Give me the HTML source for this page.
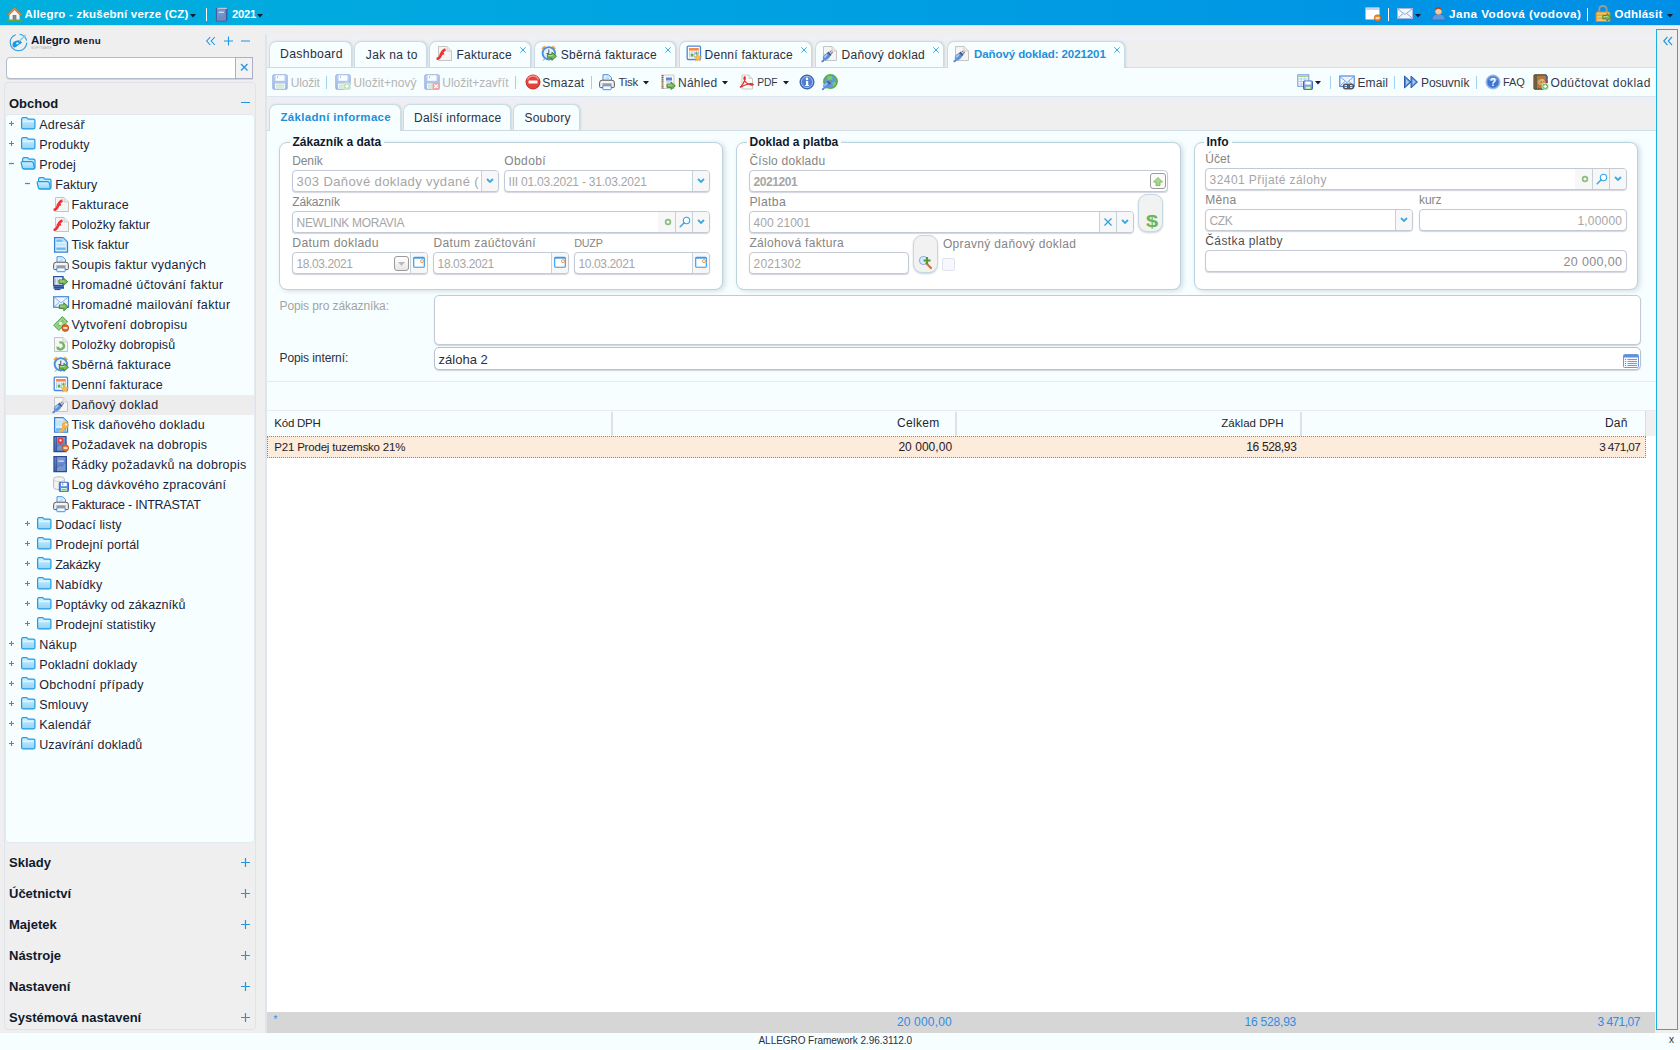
<!DOCTYPE html><html lang="cs"><head><meta charset="utf-8"><title>Allegro</title><style>
*{box-sizing:border-box;margin:0;padding:0}
html,body{width:1680px;height:1050px;overflow:hidden}
body{background:#efefef;font-family:"Liberation Sans",sans-serif;font-size:13px;color:#1b2336;position:relative}
.a{position:absolute}
.t{position:absolute;white-space:pre;line-height:1}
svg{position:absolute;overflow:visible}
#top{left:0;top:0;width:1680px;height:25px;background:linear-gradient(90deg,#00b0de 0%,#008fe6 100%)}
#top .t{color:#fff;font-weight:700}
.tab{position:absolute;top:41px;height:27px;background:#f7feff;border:1px solid #c9dbe4;border-bottom:none;border-radius:7px 7px 0 0;box-shadow:1px 0 2px rgba(150,170,190,.35)}
.tab .t{top:7px;font-size:12.5px;color:#2b3040}
.stab{position:absolute;top:104px;height:27px;background:#f7feff;border:1px solid #c9dbe4;border-bottom:none;border-radius:7px 7px 0 0;box-shadow:1px 0 2px rgba(150,170,190,.35)}
.stab .t{top:7px;font-size:12.5px;color:#2b3040}
.fs{position:absolute;background:#fff;border:1px solid #bcd3dd;border-radius:8px;box-shadow:2px 1px 5px rgba(120,140,165,.3)}
.lg{position:absolute;font-weight:700;font-size:12px;line-height:1;background:linear-gradient(#f7feff 55%,#fff 55%);padding:0 3px;color:#10192c;white-space:pre}
.lb{position:absolute;font-size:12px;line-height:1;color:#858585;white-space:pre}
.in{position:absolute;height:22px;background:#fff;border:1px solid #c3cad6;border-radius:4px;box-shadow:0 1px 1px rgba(130,140,160,.35)}
.in .v{position:absolute;left:3.600px;top:4px;font-size:13px;line-height:1;color:#a6a6a6;white-space:pre}
.in .r{left:auto;right:4px}
.bt{position:absolute;top:0;bottom:0;width:17px;background:#f7f7f7;border-left:1px solid #c3d3dc}
.bt.last{border-radius:0 3px 3px 0}
.tr{position:absolute;left:0;width:250px;height:20px}
.tr .t{top:3px;font-size:13px;color:#1b2336}
.pm{position:absolute;color:#2196e3}
.ah{position:absolute;left:9px;font-weight:700;font-size:13px;line-height:1;color:#10192c;white-space:pre}
.tb{position:absolute;top:8.500px;font-size:12px;line-height:1;color:#343a4a;white-space:pre}
.tb.d{color:#b4b4b4}
.sep{position:absolute;top:8px;width:1px;height:13px;background:#9fd2ef}
</style></head><body><svg width="0" height="0" style="position:absolute"><defs><linearGradient id="gf" x1="0" y1="0" x2="0" y2="1"><stop offset="0" stop-color="#d6f1fd"/><stop offset="1" stop-color="#8fd3f6"/></linearGradient><linearGradient id="gs" x1="0" y1="0" x2="0" y2="1"><stop offset="0" stop-color="#9fb8e8"/><stop offset="1" stop-color="#6d8fd6"/></linearGradient><linearGradient id="gb" x1="0" y1="0" x2="0" y2="1"><stop offset="0" stop-color="#7fa0d8"/><stop offset="1" stop-color="#4d6cb0"/></linearGradient></defs></svg><div id="top" class="a"><svg style="left:6px;top:6px" width="17" height="16" viewBox="0 0 16 16"><path d="M3 8 v6.500 h10 v-6.500 l-5-4.500z" fill="#f6f6f6" stroke="#c9c9c9" stroke-width=".6"/><path d="M.5 8.500 l7.500-7.500 7.500 7.500 -1.500 1.200 -6-6 -6 6z" fill="#d98c4a" stroke="#b06a2a" stroke-width=".6"/><rect x="6.500" y="9.500" width="3" height="5" fill="#8a8f9a" stroke="#5a5f6a" stroke-width=".6"/><rect x="0" y="13.500" width="16" height="1.800" rx=".9" fill="#6aa83a"/></svg><div class="t" style="top:8.5px;left:24.5px;font-size:11.5px;font-weight:700;letter-spacing:0.213px;">Allegro - zkušební verze (CZ)</div><svg style="left:190px;top:14px" width="6" height="4" viewBox="0 0 6 4"><path d="M0 0 h6 l-3 3.600z" fill="#0c1c33"/></svg><div class="a" style="left:206px;top:8px;width:1.200px;height:13px;background:#fff"></div><svg style="left:214px;top:6px" width="15" height="16" viewBox="0 0 16 16"><path d="M2.500 2 l1.500-1.500 h10.500 v13 l-1.500 2 h-10.500z" fill="#4a5fa6"/><rect x="2.500" y="2" width="10.500" height="13.500" fill="#6f96cf" stroke="#42539a" stroke-width="1"/><path d="M3.500 1.800 h10.500" stroke="#fff" stroke-width="1"/><rect x="5" y="5.500" width="5.500" height="1.200" fill="#e8eefa"/><path d="M3 12 l3-2 2 1 4.500-3 v7 h-9.500z" fill="#6a8fb8" opacity=".8"/></svg><div class="t" style="top:8.71px;left:232px;font-size:11.25px;font-weight:700;letter-spacing:-0.241px;">2021</div><svg style="left:257px;top:14px" width="6" height="4" viewBox="0 0 6 4"><path d="M0 0 h6 l-3 3.600z" fill="#0c1c33"/></svg><svg style="left:1365px;top:6px" width="16" height="16" viewBox="0 0 16 16"><rect x=".5" y="1.500" width="14" height="12" rx="1" fill="#fff" stroke="#a9b7c9" stroke-width="1"/><rect x="1" y="2" width="13" height="2" fill="#c9d3e6"/><circle cx="12.500" cy="12" r="3.300" fill="#ee8a2a" stroke="#b85a10" stroke-width=".6"/><rect x="10.600" y="11.300" width="3.800" height="1.400" fill="#fff"/></svg><div class="a" style="left:1388px;top:8px;width:1.200px;height:13px;background:#fff"></div><svg style="left:1397px;top:8px" width="16" height="11" viewBox="0 0 16 11"><rect x=".5" y=".5" width="15" height="10" fill="#f1f6fd" stroke="#9fb7de" stroke-width="1"/><path d="M.8 1 l7.200 5.500 7.200-5.500 M.8 10 l5.500-4.500 M15.200 10 l-5.500-4.500" fill="none" stroke="#8fa9d6" stroke-width="1"/></svg><svg style="left:1415px;top:14px" width="6" height="4" viewBox="0 0 6 4"><path d="M0 0 h6 l-3 3.600z" fill="#0c1c33"/></svg><svg style="left:1431px;top:6px" width="15" height="15" viewBox="0 0 16 16"><path d="M1 15 q0-5.500 4.500-6 h5 q4.500.5 4.500 6z" fill="#5b9ae0" stroke="#2f6fc2" stroke-width=".8"/><circle cx="8" cy="5.500" r="3.600" fill="#f6c9a0" stroke="#c98a5a" stroke-width=".6"/><path d="M4.200 5 q0-4 3.800-4 t3.800 4 q-2-2-3.800-2 t-3.800 2z" fill="#a8481a"/></svg><div class="t" style="top:8.29px;left:1449px;font-size:11.75px;font-weight:700;letter-spacing:0.42px;">Jana Vodová (vodova)</div><div class="a" style="left:1587px;top:8px;width:1.200px;height:13px;background:#fff"></div><svg style="left:1595px;top:5px" width="17" height="17" viewBox="0 0 16 16"><path d="M4 7 v-2.500 q0-3.500 3.500-3.500 t3.500 3.500 v2.500" fill="none" stroke="#9a9a9a" stroke-width="1.800"/><rect x="1" y="6.500" width="13" height="9" rx="1" fill="#f1c46a" stroke="#c98f2a" stroke-width="1"/><path d="M1.500 9.500 h12 M1.500 12.500 h12" stroke="#d9a23f" stroke-width="1"/><svg x="6.500" y="7.500" width="9.500" height="8" viewBox="0 0 11 10" style="position:static;overflow:visible"><path d="M.6 3 h4.900 v-2.400 l5 4.400 -5 4.400 v-2.400 h-4.900z" fill="#78b85c" stroke="#3f7f30" stroke-width="1"/><path d="M1.500 4.300 h5" stroke="#b8dfa6" stroke-width="1"/></svg></svg><div class="t" style="top:8.5px;left:1614.5px;font-size:11.5px;font-weight:700;letter-spacing:0.257px;">Odhlásit</div><svg style="left:1667px;top:14px" width="6" height="4" viewBox="0 0 6 4"><path d="M0 0 h6 l-3 3.600z" fill="#0c1c33"/></svg></div><div class="a" id="left" style="left:0;top:25px;width:260px;height:1008px"><svg style="left:9px;top:8px" width="19" height="19" viewBox="0 0 19 19"><circle cx="9.500" cy="9.500" r="8.300" fill="none" stroke="#2a9fe0" stroke-width="1.100" stroke-dasharray="36 4 10 3"/><path d="M3.500 12.500 q-.5-3.500 3-4.500 q3-1 4.500-.5 l2 2 q-1 1.500-3 2 q-2 2-4 3 q-2 .5-2.500-2z" fill="#1e97dd"/><path d="M10 8.500 l6.500-6.500" stroke="#6ccaf0" stroke-width="1.100"/><path d="M7 10 l2-.8 .8 1.200 -2 1.200z" fill="#fff"/></svg><div class="t" style="top:9.5px;left:31px;font-size:11.5px;color:#0d1b30;font-weight:700;letter-spacing:-0.1px;">Allegro</div><div class="t" style="top:22px;left:31px;font-size:3.5px;color:#b0b0b0;font-weight:400;letter-spacing:0.15px;">SOFTWARE</div><div class="t" style="top:10.87px;left:74px;font-size:9.75px;color:#10192c;font-weight:700;letter-spacing:0.449px;">Menu</div><svg style="left:205px;top:10px" width="48" height="12" viewBox="0 0 48 12"><path d="M5.300 2 l-3.600 4 3.600 4 M9.800 2 l-3.600 4 3.600 4" fill="none" stroke="#2196e3" stroke-width="1.100"/><path d="M19 6 h9 M23.500 1.500 v9 M36 6 h9" stroke="#2196e3" stroke-width="1.100"/></svg><div class="a" style="left:6px;top:32px;width:230px;height:22px;background:#fff;border:1px solid #b4bccb;border-radius:4px 0 0 4px;box-shadow:0 1px 0 rgba(120,130,150,.25)"></div><div class="a" style="left:235px;top:32px;width:18px;height:22px;background:#f3f3f3;border:1px solid #abb0c8;box-shadow:0 1px 0 rgba(120,130,150,.2)"></div><svg style="left:239.500px;top:37.500px" width="9" height="9" viewBox="0 0 9 9"><path d="M1 1 l6.500 6.500 M7.500 1 l-6.500 6.500" stroke="#2196e3" stroke-width="1.300"/></svg><div class="a" style="left:4px;top:57px;width:252px;height:948px;border:1px solid #dfe4ea;border-radius:4px"></div><div class="ah" style="top:72px">Obchod</div><div class="a" style="left:241px;top:77px;width:9px;height:1.200px;background:#2196e3"></div><div class="a" style="left:5px;top:89px;width:250px;height:729px;background:#f7feff;border-radius:4px;border:1px solid #e3e9ee;overflow:hidden"><div class="tr" style="top:0px;"><svg style="left:3px;top:6px" width="5" height="5" viewBox="0 0 5 5"><path d="M0 2.500 h5 M2.500 0 v5" stroke="#2196e3" stroke-width="1.050"/></svg><svg style="left:14.2px;top:1px" width="16" height="16" viewBox="0 0 16 16"><path d="M1.600 3.300 q0-1.600 1.600-1.600 h3 q1 0 1.500 .8 l.4 .6 h5.300 q1.500 0 1.500 1.500 v6.800 q0 1.500-1.500 1.500 h-10.300 q-1.500 0-1.500-1.500z" fill="url(#gf)" stroke="#1d9ce6" stroke-width="1.200"/><path d="M2.600 5.300 h11.200" stroke="#fff" stroke-width=".9" opacity=".85"/></svg><div class="t" style="top:3.5px;left:33.2px;font-size:12.5px;letter-spacing:0.272px;">Adresář</div></div><div class="tr" style="top:20px;"><svg style="left:3px;top:6px" width="5" height="5" viewBox="0 0 5 5"><path d="M0 2.500 h5 M2.500 0 v5" stroke="#2196e3" stroke-width="1.050"/></svg><svg style="left:14.2px;top:1px" width="16" height="16" viewBox="0 0 16 16"><path d="M1.600 3.300 q0-1.600 1.600-1.600 h3 q1 0 1.500 .8 l.4 .6 h5.300 q1.500 0 1.500 1.500 v6.800 q0 1.500-1.500 1.500 h-10.300 q-1.500 0-1.500-1.500z" fill="url(#gf)" stroke="#1d9ce6" stroke-width="1.200"/><path d="M2.600 5.300 h11.200" stroke="#fff" stroke-width=".9" opacity=".85"/></svg><div class="t" style="top:3.5px;left:33.2px;font-size:12.5px;letter-spacing:0.153px;">Produkty</div></div><div class="tr" style="top:40px;"><svg style="left:3px;top:6px" width="5" height="5" viewBox="0 0 5 5"><rect x="0" y="1.900" width="5" height="1.250" fill="#2196e3"/></svg><svg style="left:14.2px;top:1px" width="16" height="16" viewBox="0 0 16 16"><path d="M2.600 3.300 q0-1.600 1.600-1.600 h2.800 q1 0 1.500 .8 l.4 .6 h4.600 q1.500 0 1.500 1.500 v6.800 q0 1.500-1.500 1.500 h-9.400 q-1.500 0-1.500-1.500z" fill="#c4e9fb" stroke="#1d9ce6" stroke-width="1.200"/><path d="M1.300 7.300 q-.5-1.700 1.100-1.700 h9.300 q1.300 0 1.600 1.300 l1 4.600 q.3 1.400-1.100 1.400 h-9.400 q-1.200 0-1.500-1.200z" fill="url(#gf)" stroke="#1d9ce6" stroke-width="1.200"/></svg><div class="t" style="top:3.5px;left:33.2px;font-size:12.5px;letter-spacing:0.114px;">Prodej</div></div><div class="tr" style="top:60px;"><svg style="left:19px;top:6px" width="5" height="5" viewBox="0 0 5 5"><rect x="0" y="1.900" width="5" height="1.250" fill="#2196e3"/></svg><svg style="left:30.2px;top:1px" width="16" height="16" viewBox="0 0 16 16"><path d="M2.600 3.300 q0-1.600 1.600-1.600 h2.800 q1 0 1.500 .8 l.4 .6 h4.600 q1.500 0 1.500 1.500 v6.800 q0 1.500-1.500 1.500 h-9.400 q-1.500 0-1.500-1.500z" fill="#c4e9fb" stroke="#1d9ce6" stroke-width="1.200"/><path d="M1.300 7.300 q-.5-1.700 1.100-1.700 h9.300 q1.300 0 1.600 1.300 l1 4.600 q.3 1.400-1.100 1.400 h-9.400 q-1.200 0-1.500-1.200z" fill="url(#gf)" stroke="#1d9ce6" stroke-width="1.200"/></svg><div class="t" style="top:3.5px;left:49.2px;font-size:12.5px;letter-spacing:0.055px;">Faktury</div></div><div class="tr" style="top:80px;"><svg style="left:47px;top:1px" width="16" height="16" viewBox="0 0 16 16"><svg x="0" y="0" width="16" height="16" viewBox="0 0 16 16" style="position:static;overflow:visible"><path d="M2.500 1.500 h8.500 l4.500 4.500 v9.500 h-13z" fill="#f5f5f5" stroke="#c4c4c4" stroke-width="1"/><path d="M11 1.500 v4.500 h4.500" fill="#e9e9e9" stroke="#c8c8c8" stroke-width=".8"/></svg><path d="M.6 14 q3.200-.6 4.300-4.200 q1.200-4.300 4.600-5.300" fill="none" stroke="#ee3338" stroke-width="2.600"/><path d="M3.800 9.300 l4.200-.9" stroke="#ee3338" stroke-width="2"/></svg><div class="t" style="top:3.5px;left:65.4px;font-size:12.5px;letter-spacing:0.203px;">Fakturace</div></div><div class="tr" style="top:100px;"><svg style="left:47px;top:1px" width="16" height="16" viewBox="0 0 16 16"><svg x="0" y="0" width="16" height="16" viewBox="0 0 16 16" style="position:static;overflow:visible"><path d="M2.500 1.500 h8.500 l4.500 4.500 v9.500 h-13z" fill="#f5f5f5" stroke="#c4c4c4" stroke-width="1"/><path d="M11 1.500 v4.500 h4.500" fill="#e9e9e9" stroke="#c8c8c8" stroke-width=".8"/></svg><path d="M.6 14 q3.200-.6 4.300-4.200 q1.200-4.300 4.600-5.300" fill="none" stroke="#ee3338" stroke-width="2.600"/><path d="M3.800 9.300 l4.200-.9" stroke="#ee3338" stroke-width="2"/></svg><div class="t" style="top:3.5px;left:65.4px;font-size:12.5px;">Položky faktur</div></div><div class="tr" style="top:120px;"><svg style="left:47px;top:1px" width="16" height="17" viewBox="0 0 16 17"><path d="M1.600 1.600 h8.400 l4.500 4.500 v10 h-12.900z" fill="#dbeefa" stroke="#3a80d6" stroke-width="1.300"/><path d="M10 2 v4 h4z" fill="#b9dcf3"/><rect x="3.300" y="3.500" width="6.200" height="2.300" fill="#5cc0f5"/><rect x="3.300" y="11.500" width="9.400" height="2.400" fill="#5cc0f5"/><path d="M3.500 8.500 h9" stroke="#c2e3f6" stroke-width="1.500"/></svg><div class="t" style="top:3.5px;left:65.4px;font-size:12.5px;letter-spacing:0.022px;">Tisk faktur</div></div><div class="tr" style="top:140px;"><svg style="left:47px;top:1px" width="16" height="16" viewBox="0 0 16 16"><path d="M4 6.500 v-5.800 h5.500 l3 3 v2.800z" fill="#e2f1fb" stroke="#4a8fe0" stroke-width="1"/><path d="M7 3 h3 M6.500 4.500 h3.500" stroke="#a9d3f0" stroke-width=".8"/><path d="M.6 8.800 q0-2.600 2.600-2.600 h9.600 q2.600 0 2.600 2.600 v3.800 q0 1-1 1 h-12.800 q-1 0-1-1z" fill="#ececec" stroke="#5c5c5c" stroke-width="1"/><path d="M2.500 8 h11" stroke="#fff" stroke-width="1"/><rect x="3.500" y="9.300" width="9" height="2.200" fill="#9c9c9c"/><path d="M3.800 11.800 h8.400 v3.200 q0 .7-.7 .7 h-7 q-.7 0-.7-.7z" fill="#f6faff" stroke="#4a8fe0" stroke-width="1"/></svg><div class="t" style="top:3.5px;left:65.4px;font-size:12.5px;letter-spacing:0.251px;">Soupis faktur vydaných</div></div><div class="tr" style="top:160px;"><svg style="left:47px;top:1px" width="16" height="16" viewBox="0 0 16 16"><path d="M.7 .7 h9.300 v8.800 h-9.300z" fill="#eef1f6" stroke="#2b4fa0" stroke-width="1.300"/><path d="M2.500 2.500 v5 M4.300 2.500 v5" stroke="#b9c0cc" stroke-width="1"/><path d="M.5 10.200 h10.500 v2.600 h-10.500z" fill="#2b4fa0"/><path d="M1.500 13.500 h6" stroke="#2b4fa0" stroke-width="1.200"/><svg x="4.800" y="1.200" width="11" height="9" viewBox="0 0 11 10" style="position:static;overflow:visible"><path d="M.6 3 h4.900 v-2.400 l5 4.400 -5 4.400 v-2.400 h-4.900z" fill="#78b85c" stroke="#3f7f30" stroke-width="1"/><path d="M1.500 4.300 h5" stroke="#b8dfa6" stroke-width="1"/></svg></svg><div class="t" style="top:3.5px;left:65.4px;font-size:12.5px;letter-spacing:0.347px;">Hromadné účtování faktur</div></div><div class="tr" style="top:180px;"><svg style="left:47px;top:1px" width="16" height="16" viewBox="0 0 16 16"><rect x=".7" y=".7" width="14.800" height="10.600" fill="#eef5fd" stroke="#4b86dc" stroke-width="1.200"/><path d="M1 1 l7.100 6 7.100-6 M1 11 l5-4.500 M15 11 l-5-4.500" fill="none" stroke="#86b0ea" stroke-width="1"/><svg x="5.800" y="6" width="10" height="9.500" viewBox="0 0 11 10" style="position:static;overflow:visible"><path d="M.6 3 h4.900 v-2.400 l5 4.400 -5 4.400 v-2.400 h-4.900z" fill="#78b85c" stroke="#3f7f30" stroke-width="1"/><path d="M1.500 4.300 h5" stroke="#b8dfa6" stroke-width="1"/></svg></svg><div class="t" style="top:3.5px;left:65.4px;font-size:12.5px;letter-spacing:0.36px;">Hromadné mailování faktur</div></div><div class="tr" style="top:200px;"><svg style="left:47px;top:1px" width="16" height="16" viewBox="0 0 16 16"><path d="M.6 9.200 l8.800-8.600 5.200 5.200 -8.800 8.600z" fill="#86c878" stroke="#5aa64c" stroke-width="1"/><path d="M2.500 9.200 l6.900-6.700 3.300 3.300 -6.900 6.700z" fill="none" stroke="#b6e0ac" stroke-width=".8"/><circle cx="7.600" cy="7.400" r="1.600" fill="#e6f5e0"/><circle cx="12.300" cy="12" r="3.400" fill="#e86a24" stroke="#b6450c" stroke-width=".8"/><rect x="10.300" y="11.200" width="4" height="1.500" fill="#fff"/></svg><div class="t" style="top:3.5px;left:65.4px;font-size:12.5px;letter-spacing:0.283px;">Vytvoření dobropisu</div></div><div class="tr" style="top:220px;"><svg style="left:47px;top:1px" width="16" height="16" viewBox="0 0 16 16"><path d="M1.500 1.500 h8.500 l4.500 4.500 v9.500 h-13z" fill="#f5f5f5" stroke="#c4c4c4" stroke-width="1"/><path d="M10 1.500 v4.500 h4.500" fill="#e9e9e9" stroke="#c8c8c8" stroke-width=".8"/><path d="M6.300 6.700 a3.400 3.400 0 1 1-1.800 4.800" fill="none" stroke="#72b764" stroke-width="2.400"/><path d="M3.200 10.500 l3.600 .4 -2.400 3.600z" fill="#72b764"/></svg><div class="t" style="top:3.5px;left:65.4px;font-size:12.5px;letter-spacing:0.098px;">Položky dobropisů</div></div><div class="tr" style="top:240px;"><svg style="left:47px;top:1px" width="16" height="16" viewBox="0 0 16 16"><path d="M.3 3.300 l3-2.800 1.600 1.700 -3 2.800z M15 3.300 l-3-2.800 -1.600 1.700 3 2.800z" fill="#f6a93f"/><circle cx="7.800" cy="8.300" r="6.200" fill="#e9f1fb" stroke="#4b8fe0" stroke-width="1.900"/><path d="M7.800 4.500 v4 h-2.300" stroke="#555" fill="none" stroke-width="1"/><path d="M2 15.500 l1.500-1.500" stroke="#888" stroke-width="1"/><svg x="5.800" y="6.500" width="10.200" height="9.500" viewBox="0 0 11 10" style="position:static;overflow:visible"><path d="M.6 3 h4.900 v-2.400 l5 4.400 -5 4.400 v-2.400 h-4.900z" fill="#78b85c" stroke="#3f7f30" stroke-width="1"/><path d="M1.500 4.300 h5" stroke="#b8dfa6" stroke-width="1"/></svg></svg><div class="t" style="top:3.5px;left:65.4px;font-size:12.5px;letter-spacing:0.294px;">Sběrná fakturace</div></div><div class="tr" style="top:260px;"><svg style="left:47px;top:1px" width="16" height="16" viewBox="0 0 16 16"><rect x="1.200" y="1.200" width="13.300" height="13.300" rx="1" fill="#fff" stroke="#4b86dc" stroke-width="1.300"/><rect x="3" y="3" width="9.800" height="2.600" fill="#f6894a"/><path d="M3.700 6.200 v6.300 M6 6.200 v6.300 M8.300 6.200 v6.300 M10.600 6.200 v6.300 M12.500 6.200 v3" stroke="#9ab6e6" stroke-width=".9"/><path d="M4.800 8.800 h2.600 v2.600 h-2.600z M9.300 7.200 h2.300 v2.300 h-2.300z" fill="#5ab24a"/><path d="M11.800 9 l1.200 2.400 2.600.3 -1.900 1.800 .5 2.600 -2.400-1.300 -2.300 1.300 .5-2.600 -1.900-1.800 2.600-.3z" fill="#f8bd4a" stroke="#ee9f2a" stroke-width=".5"/></svg><div class="t" style="top:3.5px;left:65.4px;font-size:12.5px;letter-spacing:0.226px;">Denní fakturace</div></div><div class="tr" style="top:280px;background:#ededed;"><svg style="left:47px;top:1px" width="16" height="16" viewBox="0 0 16 16"><svg x="-1" y="0" width="16" height="16" viewBox="0 0 16 16" style="position:static;overflow:visible"><path d="M2.500 1.500 h8.500 l4.500 4.500 v9.500 h-13z" fill="#f5f5f5" stroke="#c4c4c4" stroke-width="1"/><path d="M11 1.500 v4.500 h4.500" fill="#e9e9e9" stroke="#c8c8c8" stroke-width=".8"/></svg><svg x="-.8" y="2.800" width="14" height="14" viewBox="0 0 16 16" style="position:static;overflow:visible"><path d="M.4 15.700 q2-.3 2.800-2.200" stroke="#4f7fcc" stroke-width="2" fill="none"/><ellipse cx="6.200" cy="10" rx="4.900" ry="3.300" transform="rotate(-45 6.200 10)" fill="#5e8fd8"/><ellipse cx="5.100" cy="9.200" rx="2.800" ry="1.100" transform="rotate(-45 5.100 9.200)" fill="#a9c8f2"/><path d="M6.800 5.800 l3.600 3.600 1.500-1.500 -3.600-3.600z" fill="#46598a"/><path d="M9.700 5.300 l2-2 M11.200 6.800 l2-2" stroke="#80858f" stroke-width="1.400"/></svg></svg><div class="t" style="top:3.5px;left:65.4px;font-size:12.5px;letter-spacing:0.335px;">Daňový doklad</div></div><div class="tr" style="top:300px;"><svg style="left:47px;top:1px" width="16" height="17" viewBox="0 0 16 17"><path d="M1.600 1.600 h8.400 l4.500 4.500 v10 h-12.900z" fill="#dbeefa" stroke="#3a80d6" stroke-width="1.300"/><path d="M10 2 v4 h4z" fill="#b9dcf3"/><rect x="3" y="12.200" width="10" height="2.600" fill="#5cc0f5"/><path d="M3 4 h5 l3 3 v3 h-8z" fill="#c6e4f6"/><circle cx="12.300" cy="9.300" r="3" fill="#f6b652" stroke="#e8992a" stroke-width=".7"/><path d="M10.300 10.800 l-5 5 1.600 1.200 1.200-1.200 1 .6 3.200-3.600z" fill="#f6b652" stroke="#e8992a" stroke-width=".5"/><circle cx="13" cy="8.500" r=".9" fill="#fff"/></svg><div class="t" style="top:3.5px;left:65.4px;font-size:12.5px;letter-spacing:0.261px;">Tisk daňového dokladu</div></div><div class="tr" style="top:320px;"><svg style="left:47px;top:1px" width="16" height="16" viewBox="0 0 16 16"><path d="M1 .6 h12 v15 h-12z" fill="url(#gb)" stroke="#2f4a94" stroke-width="1.300"/><path d="M3.200 1 v14.500" stroke="#2f4a94" stroke-width="1"/><path d="M4 11.500 l3-2 2 1 3.500-3 v7 h-8.500z" fill="#86a6d8" opacity=".6"/><path d="M4.800 3.200 q0-1.200 1.200-1.200 h3 q1.200 0 1.200 1.200 v2.600 q0 1-1 1.200 l-1.700 1.800 -1.700-1.800 q-1-.2-1-1.200z" fill="#ee3b3b"/><circle cx="7.500" cy="4.400" r="1.100" fill="#fff"/><circle cx="12.500" cy="12" r="3.200" fill="#ee7a2a" stroke="#b6500e" stroke-width=".7"/><rect x="10.600" y="11.300" width="3.800" height="1.400" fill="#fff"/></svg><div class="t" style="top:3.5px;left:65.4px;font-size:12.5px;letter-spacing:0.248px;">Požadavek na dobropis</div></div><div class="tr" style="top:340px;"><svg style="left:47px;top:1px" width="16" height="16" viewBox="0 0 16 16"><path d="M1 .6 h12.300 v15 h-12.300z" fill="url(#gb)" stroke="#2f4a94" stroke-width="1.300"/><path d="M3.200 1 v14.500" stroke="#2f4a94" stroke-width="1"/><rect x="5.300" y="4.500" width="5.500" height="1.300" fill="#d6e2f6"/><path d="M4 12 l3-2 2 1 3.500-3.500 v7.500 h-8.500z" fill="#86a6d8" opacity=".7"/></svg><div class="t" style="top:3.5px;left:65.4px;font-size:12.5px;letter-spacing:0.26px;">Řádky požadavků na dobropis</div></div><div class="tr" style="top:360px;"><svg style="left:47px;top:1px" width="16" height="16" viewBox="0 0 16 16"><path d="M.6 3.200 q0-2.400 5.400-2.400 t5.400 2.400 v8 q0 2.400-5.400 2.400 t-5.400-2.400z" fill="#f3f3f3" stroke="#bdbdbd" stroke-width="1"/><path d="M.6 3.200 q0 2.400 5.400 2.400 t5.400-2.400" fill="none" stroke="#c9c9c9" stroke-width=".8"/><rect x="6.300" y="6.300" width="9.200" height="9.200" rx=".8" fill="#5f8ae0" stroke="#3a64c6" stroke-width="1"/><rect x="8" y="6.800" width="5.800" height="3.400" fill="#fff"/><rect x="9.200" y="7.300" width="1" height="2" fill="#5f8ae0"/><rect x="8" y="12" width="5.800" height="3.200" fill="#dcf3d2"/><rect x="8.500" y="13.200" width="4.800" height="1.200" fill="#6cbf5a"/></svg><div class="t" style="top:3.5px;left:65.4px;font-size:12.5px;letter-spacing:0.226px;">Log dávkového zpracování</div></div><div class="tr" style="top:380px;"><svg style="left:47px;top:1px" width="16" height="16" viewBox="0 0 16 16"><path d="M4 6.500 v-5.800 h5.500 l3 3 v2.800z" fill="#e2f1fb" stroke="#4a8fe0" stroke-width="1"/><path d="M7 3 h3 M6.500 4.500 h3.500" stroke="#a9d3f0" stroke-width=".8"/><path d="M.6 8.800 q0-2.600 2.600-2.600 h9.600 q2.600 0 2.600 2.600 v3.800 q0 1-1 1 h-12.800 q-1 0-1-1z" fill="#ececec" stroke="#5c5c5c" stroke-width="1"/><path d="M2.500 8 h11" stroke="#fff" stroke-width="1"/><rect x="3.500" y="9.300" width="9" height="2.200" fill="#9c9c9c"/><path d="M3.800 11.800 h8.400 v3.200 q0 .7-.7 .7 h-7 q-.7 0-.7-.7z" fill="#f6faff" stroke="#4a8fe0" stroke-width="1"/></svg><div class="t" style="top:3.5px;left:65.4px;font-size:12.5px;letter-spacing:-0.244px;">Fakturace - INTRASTAT</div></div><div class="tr" style="top:400px;"><svg style="left:19px;top:6px" width="5" height="5" viewBox="0 0 5 5"><path d="M0 2.500 h5 M2.500 0 v5" stroke="#2196e3" stroke-width="1.050"/></svg><svg style="left:30.2px;top:1px" width="16" height="16" viewBox="0 0 16 16"><path d="M1.600 3.300 q0-1.600 1.600-1.600 h3 q1 0 1.500 .8 l.4 .6 h5.300 q1.500 0 1.500 1.500 v6.800 q0 1.500-1.500 1.500 h-10.300 q-1.500 0-1.500-1.500z" fill="url(#gf)" stroke="#1d9ce6" stroke-width="1.200"/><path d="M2.600 5.300 h11.200" stroke="#fff" stroke-width=".9" opacity=".85"/></svg><div class="t" style="top:3.5px;left:49.2px;font-size:12.5px;letter-spacing:0.163px;">Dodací listy</div></div><div class="tr" style="top:420px;"><svg style="left:19px;top:6px" width="5" height="5" viewBox="0 0 5 5"><path d="M0 2.500 h5 M2.500 0 v5" stroke="#2196e3" stroke-width="1.050"/></svg><svg style="left:30.2px;top:1px" width="16" height="16" viewBox="0 0 16 16"><path d="M1.600 3.300 q0-1.600 1.600-1.600 h3 q1 0 1.500 .8 l.4 .6 h5.300 q1.500 0 1.500 1.500 v6.800 q0 1.500-1.500 1.500 h-10.300 q-1.500 0-1.500-1.500z" fill="url(#gf)" stroke="#1d9ce6" stroke-width="1.200"/><path d="M2.600 5.300 h11.200" stroke="#fff" stroke-width=".9" opacity=".85"/></svg><div class="t" style="top:3.5px;left:49.2px;font-size:12.5px;letter-spacing:0.186px;">Prodejní portál</div></div><div class="tr" style="top:440px;"><svg style="left:19px;top:6px" width="5" height="5" viewBox="0 0 5 5"><path d="M0 2.500 h5 M2.500 0 v5" stroke="#2196e3" stroke-width="1.050"/></svg><svg style="left:30.2px;top:1px" width="16" height="16" viewBox="0 0 16 16"><path d="M1.600 3.300 q0-1.600 1.600-1.600 h3 q1 0 1.500 .8 l.4 .6 h5.300 q1.500 0 1.500 1.500 v6.800 q0 1.500-1.500 1.500 h-10.300 q-1.500 0-1.500-1.500z" fill="url(#gf)" stroke="#1d9ce6" stroke-width="1.200"/><path d="M2.600 5.300 h11.200" stroke="#fff" stroke-width=".9" opacity=".85"/></svg><div class="t" style="top:3.5px;left:49.2px;font-size:12.5px;letter-spacing:-0.206px;">Zakázky</div></div><div class="tr" style="top:460px;"><svg style="left:19px;top:6px" width="5" height="5" viewBox="0 0 5 5"><path d="M0 2.500 h5 M2.500 0 v5" stroke="#2196e3" stroke-width="1.050"/></svg><svg style="left:30.2px;top:1px" width="16" height="16" viewBox="0 0 16 16"><path d="M1.600 3.300 q0-1.600 1.600-1.600 h3 q1 0 1.500 .8 l.4 .6 h5.300 q1.500 0 1.500 1.500 v6.800 q0 1.500-1.500 1.500 h-10.300 q-1.500 0-1.500-1.500z" fill="url(#gf)" stroke="#1d9ce6" stroke-width="1.200"/><path d="M2.600 5.300 h11.200" stroke="#fff" stroke-width=".9" opacity=".85"/></svg><div class="t" style="top:3.5px;left:49.2px;font-size:12.5px;letter-spacing:0.208px;">Nabídky</div></div><div class="tr" style="top:480px;"><svg style="left:19px;top:6px" width="5" height="5" viewBox="0 0 5 5"><path d="M0 2.500 h5 M2.500 0 v5" stroke="#2196e3" stroke-width="1.050"/></svg><svg style="left:30.2px;top:1px" width="16" height="16" viewBox="0 0 16 16"><path d="M1.600 3.300 q0-1.600 1.600-1.600 h3 q1 0 1.500 .8 l.4 .6 h5.300 q1.500 0 1.500 1.500 v6.800 q0 1.500-1.500 1.500 h-10.300 q-1.500 0-1.500-1.500z" fill="url(#gf)" stroke="#1d9ce6" stroke-width="1.200"/><path d="M2.600 5.300 h11.200" stroke="#fff" stroke-width=".9" opacity=".85"/></svg><div class="t" style="top:3.5px;left:49.2px;font-size:12.5px;letter-spacing:0.083px;">Poptávky od zákazníků</div></div><div class="tr" style="top:500px;"><svg style="left:19px;top:6px" width="5" height="5" viewBox="0 0 5 5"><path d="M0 2.500 h5 M2.500 0 v5" stroke="#2196e3" stroke-width="1.050"/></svg><svg style="left:30.2px;top:1px" width="16" height="16" viewBox="0 0 16 16"><path d="M1.600 3.300 q0-1.600 1.600-1.600 h3 q1 0 1.500 .8 l.4 .6 h5.300 q1.500 0 1.500 1.500 v6.800 q0 1.500-1.500 1.500 h-10.300 q-1.500 0-1.500-1.500z" fill="url(#gf)" stroke="#1d9ce6" stroke-width="1.200"/><path d="M2.600 5.300 h11.200" stroke="#fff" stroke-width=".9" opacity=".85"/></svg><div class="t" style="top:3.5px;left:49.2px;font-size:12.5px;letter-spacing:0.136px;">Prodejní statistiky</div></div><div class="tr" style="top:520px;"><svg style="left:3px;top:6px" width="5" height="5" viewBox="0 0 5 5"><path d="M0 2.500 h5 M2.500 0 v5" stroke="#2196e3" stroke-width="1.050"/></svg><svg style="left:14.2px;top:1px" width="16" height="16" viewBox="0 0 16 16"><path d="M1.600 3.300 q0-1.600 1.600-1.600 h3 q1 0 1.500 .8 l.4 .6 h5.300 q1.500 0 1.500 1.500 v6.800 q0 1.500-1.500 1.500 h-10.300 q-1.500 0-1.500-1.500z" fill="url(#gf)" stroke="#1d9ce6" stroke-width="1.200"/><path d="M2.600 5.300 h11.200" stroke="#fff" stroke-width=".9" opacity=".85"/></svg><div class="t" style="top:3.5px;left:33.2px;font-size:12.5px;letter-spacing:0.317px;">Nákup</div></div><div class="tr" style="top:540px;"><svg style="left:3px;top:6px" width="5" height="5" viewBox="0 0 5 5"><path d="M0 2.500 h5 M2.500 0 v5" stroke="#2196e3" stroke-width="1.050"/></svg><svg style="left:14.2px;top:1px" width="16" height="16" viewBox="0 0 16 16"><path d="M1.600 3.300 q0-1.600 1.600-1.600 h3 q1 0 1.500 .8 l.4 .6 h5.300 q1.500 0 1.500 1.500 v6.800 q0 1.500-1.500 1.500 h-10.300 q-1.500 0-1.500-1.500z" fill="url(#gf)" stroke="#1d9ce6" stroke-width="1.200"/><path d="M2.600 5.300 h11.200" stroke="#fff" stroke-width=".9" opacity=".85"/></svg><div class="t" style="top:3.5px;left:33.2px;font-size:12.5px;letter-spacing:0.174px;">Pokladní doklady</div></div><div class="tr" style="top:560px;"><svg style="left:3px;top:6px" width="5" height="5" viewBox="0 0 5 5"><path d="M0 2.500 h5 M2.500 0 v5" stroke="#2196e3" stroke-width="1.050"/></svg><svg style="left:14.2px;top:1px" width="16" height="16" viewBox="0 0 16 16"><path d="M1.600 3.300 q0-1.600 1.600-1.600 h3 q1 0 1.500 .8 l.4 .6 h5.300 q1.500 0 1.500 1.500 v6.800 q0 1.500-1.500 1.500 h-10.300 q-1.500 0-1.500-1.500z" fill="url(#gf)" stroke="#1d9ce6" stroke-width="1.200"/><path d="M2.600 5.300 h11.200" stroke="#fff" stroke-width=".9" opacity=".85"/></svg><div class="t" style="top:3.5px;left:33.2px;font-size:12.5px;letter-spacing:0.329px;">Obchodní případy</div></div><div class="tr" style="top:580px;"><svg style="left:3px;top:6px" width="5" height="5" viewBox="0 0 5 5"><path d="M0 2.500 h5 M2.500 0 v5" stroke="#2196e3" stroke-width="1.050"/></svg><svg style="left:14.2px;top:1px" width="16" height="16" viewBox="0 0 16 16"><path d="M1.600 3.300 q0-1.600 1.600-1.600 h3 q1 0 1.500 .8 l.4 .6 h5.300 q1.500 0 1.500 1.500 v6.800 q0 1.500-1.500 1.500 h-10.300 q-1.500 0-1.500-1.500z" fill="url(#gf)" stroke="#1d9ce6" stroke-width="1.200"/><path d="M2.600 5.300 h11.200" stroke="#fff" stroke-width=".9" opacity=".85"/></svg><div class="t" style="top:3.5px;left:33.2px;font-size:12.5px;letter-spacing:0.178px;">Smlouvy</div></div><div class="tr" style="top:600px;"><svg style="left:3px;top:6px" width="5" height="5" viewBox="0 0 5 5"><path d="M0 2.500 h5 M2.500 0 v5" stroke="#2196e3" stroke-width="1.050"/></svg><svg style="left:14.2px;top:1px" width="16" height="16" viewBox="0 0 16 16"><path d="M1.600 3.300 q0-1.600 1.600-1.600 h3 q1 0 1.500 .8 l.4 .6 h5.300 q1.500 0 1.500 1.500 v6.800 q0 1.500-1.500 1.500 h-10.300 q-1.500 0-1.500-1.500z" fill="url(#gf)" stroke="#1d9ce6" stroke-width="1.200"/><path d="M2.600 5.300 h11.200" stroke="#fff" stroke-width=".9" opacity=".85"/></svg><div class="t" style="top:3.5px;left:33.2px;font-size:12.5px;letter-spacing:0.224px;">Kalendář</div></div><div class="tr" style="top:620px;"><svg style="left:3px;top:6px" width="5" height="5" viewBox="0 0 5 5"><path d="M0 2.500 h5 M2.500 0 v5" stroke="#2196e3" stroke-width="1.050"/></svg><svg style="left:14.2px;top:1px" width="16" height="16" viewBox="0 0 16 16"><path d="M1.600 3.300 q0-1.600 1.600-1.600 h3 q1 0 1.500 .8 l.4 .6 h5.300 q1.500 0 1.500 1.500 v6.800 q0 1.500-1.500 1.500 h-10.300 q-1.500 0-1.500-1.500z" fill="url(#gf)" stroke="#1d9ce6" stroke-width="1.200"/><path d="M2.600 5.300 h11.200" stroke="#fff" stroke-width=".9" opacity=".85"/></svg><div class="t" style="top:3.5px;left:33.2px;font-size:12.5px;letter-spacing:0.141px;">Uzavírání dokladů</div></div></div><div class="ah" style="top:831px">Sklady</div><svg style="left:241px;top:832.5px" width="9" height="9" viewBox="0 0 9 9"><path d="M0 4.500 h9 M4.500 0 v9" stroke="#2196e3" stroke-width="1.200"/></svg><div class="ah" style="top:862px">Účetnictví</div><svg style="left:241px;top:863.5px" width="9" height="9" viewBox="0 0 9 9"><path d="M0 4.500 h9 M4.500 0 v9" stroke="#2196e3" stroke-width="1.200"/></svg><div class="ah" style="top:893px">Majetek</div><svg style="left:241px;top:894.5px" width="9" height="9" viewBox="0 0 9 9"><path d="M0 4.500 h9 M4.500 0 v9" stroke="#2196e3" stroke-width="1.200"/></svg><div class="ah" style="top:924px">Nástroje</div><svg style="left:241px;top:925.5px" width="9" height="9" viewBox="0 0 9 9"><path d="M0 4.500 h9 M4.500 0 v9" stroke="#2196e3" stroke-width="1.200"/></svg><div class="ah" style="top:955px">Nastavení</div><svg style="left:241px;top:956.5px" width="9" height="9" viewBox="0 0 9 9"><path d="M0 4.500 h9 M4.500 0 v9" stroke="#2196e3" stroke-width="1.200"/></svg><div class="ah" style="top:986px">Systémová nastavení</div><svg style="left:241px;top:987.5px" width="9" height="9" viewBox="0 0 9 9"><path d="M0 4.500 h9 M4.500 0 v9" stroke="#2196e3" stroke-width="1.200"/></svg></div><div class="a" style="left:265px;top:34px;width:1.500px;height:999px;background:#dfe5ec"></div><div class="a" style="left:267px;top:35px;width:1389px;height:4.500px;background:#eeeff7"></div><div class="a" style="left:0;top:25px;width:1680px;height:1px;background:#d3dbe3"></div><div class="a" style="left:267px;top:67px;width:1389px;height:1px;background:#d3dfe7"></div><div class="tab" style="left:269px;width:83px;height:26px"><div class="t" style="top:6.29px;left:10px;font-size:12.25px;letter-spacing:0.322px;">Dashboard</div></div><div class="tab" style="left:354px;width:73px;height:26px"><div class="t" style="top:6.5px;left:10.8px;font-size:12px;letter-spacing:0.376px;">Jak na to</div></div><div class="tab" style="left:429px;width:102px;height:26px"><svg style="left:5.5px;top:2.8px" width="16" height="16" viewBox="0 0 16 16"><svg x="0" y="0" width="16" height="16" viewBox="0 0 16 16" style="position:static;overflow:visible"><path d="M2.500 1.500 h8.500 l4.500 4.500 v9.500 h-13z" fill="#f5f5f5" stroke="#c4c4c4" stroke-width="1"/><path d="M11 1.500 v4.500 h4.500" fill="#e9e9e9" stroke="#c8c8c8" stroke-width=".8"/></svg><path d="M.6 14 q3.200-.6 4.300-4.200 q1.200-4.300 4.600-5.300" fill="none" stroke="#ee3338" stroke-width="2.600"/><path d="M3.800 9.300 l4.200-.9" stroke="#ee3338" stroke-width="2"/></svg><div class="t" style="top:6.5px;left:26.4px;font-size:12px;letter-spacing:0.256px;">Fakturace</div><svg style="left:89.5px;top:4.500px" width="6" height="6" viewBox="0 0 6 6"><path d="M.3 .3 l5.400 5.400 M5.700 .3 l-5.400 5.400" stroke="#3eaae6" stroke-width="1"/></svg></div><div class="tab" style="left:534px;width:142px;height:26px"><svg style="left:5.5px;top:2.8px" width="16" height="16" viewBox="0 0 16 16"><path d="M.3 3.300 l3-2.800 1.600 1.700 -3 2.800z M15 3.300 l-3-2.800 -1.600 1.700 3 2.800z" fill="#f6a93f"/><circle cx="7.800" cy="8.300" r="6.200" fill="#e9f1fb" stroke="#4b8fe0" stroke-width="1.900"/><path d="M7.800 4.500 v4 h-2.300" stroke="#555" fill="none" stroke-width="1"/><path d="M2 15.500 l1.500-1.500" stroke="#888" stroke-width="1"/><svg x="5.800" y="6.500" width="10.200" height="9.500" viewBox="0 0 11 10" style="position:static;overflow:visible"><path d="M.6 3 h4.900 v-2.400 l5 4.400 -5 4.400 v-2.400 h-4.900z" fill="#78b85c" stroke="#3f7f30" stroke-width="1"/><path d="M1.500 4.300 h5" stroke="#b8dfa6" stroke-width="1"/></svg></svg><div class="t" style="top:6.5px;left:25.8px;font-size:12px;letter-spacing:0.295px;">Sběrná fakturace</div><svg style="left:129.5px;top:4.500px" width="6" height="6" viewBox="0 0 6 6"><path d="M.3 .3 l5.400 5.400 M5.700 .3 l-5.400 5.400" stroke="#3eaae6" stroke-width="1"/></svg></div><div class="tab" style="left:679px;width:133px;height:26px"><svg style="left:5.5px;top:2.8px" width="16" height="16" viewBox="0 0 16 16"><rect x="1.200" y="1.200" width="13.300" height="13.300" rx="1" fill="#fff" stroke="#4b86dc" stroke-width="1.300"/><rect x="3" y="3" width="9.800" height="2.600" fill="#f6894a"/><path d="M3.700 6.200 v6.300 M6 6.200 v6.300 M8.300 6.200 v6.300 M10.600 6.200 v6.300 M12.500 6.200 v3" stroke="#9ab6e6" stroke-width=".9"/><path d="M4.800 8.800 h2.600 v2.600 h-2.600z M9.300 7.200 h2.300 v2.300 h-2.300z" fill="#5ab24a"/><path d="M11.800 9 l1.200 2.400 2.600.3 -1.900 1.800 .5 2.600 -2.400-1.300 -2.300 1.300 .5-2.600 -1.900-1.800 2.600-.3z" fill="#f8bd4a" stroke="#ee9f2a" stroke-width=".5"/></svg><div class="t" style="top:6.5px;left:24.6px;font-size:12px;letter-spacing:0.249px;">Denní fakturace</div><svg style="left:120.5px;top:4.500px" width="6" height="6" viewBox="0 0 6 6"><path d="M.3 .3 l5.400 5.400 M5.700 .3 l-5.400 5.400" stroke="#3eaae6" stroke-width="1"/></svg></div><div class="tab" style="left:815px;width:129px;height:26px"><svg style="left:5.5px;top:2.8px" width="16" height="16" viewBox="0 0 16 16"><svg x="-1" y="0" width="16" height="16" viewBox="0 0 16 16" style="position:static;overflow:visible"><path d="M2.500 1.500 h8.500 l4.500 4.500 v9.500 h-13z" fill="#f5f5f5" stroke="#c4c4c4" stroke-width="1"/><path d="M11 1.500 v4.500 h4.500" fill="#e9e9e9" stroke="#c8c8c8" stroke-width=".8"/></svg><svg x="-.8" y="2.800" width="14" height="14" viewBox="0 0 16 16" style="position:static;overflow:visible"><path d="M.4 15.700 q2-.3 2.800-2.200" stroke="#4f7fcc" stroke-width="2" fill="none"/><ellipse cx="6.200" cy="10" rx="4.900" ry="3.300" transform="rotate(-45 6.200 10)" fill="#5e8fd8"/><ellipse cx="5.100" cy="9.200" rx="2.800" ry="1.100" transform="rotate(-45 5.100 9.200)" fill="#a9c8f2"/><path d="M6.800 5.800 l3.600 3.600 1.500-1.500 -3.600-3.600z" fill="#46598a"/><path d="M9.700 5.300 l2-2 M11.200 6.800 l2-2" stroke="#80858f" stroke-width="1.400"/></svg></svg><div class="t" style="top:6.5px;left:25.6px;font-size:12px;letter-spacing:0.318px;">Daňový doklad</div><svg style="left:116.5px;top:4.500px" width="6" height="6" viewBox="0 0 6 6"><path d="M.3 .3 l5.400 5.400 M5.700 .3 l-5.400 5.400" stroke="#3eaae6" stroke-width="1"/></svg></div><div class="tab" style="left:947px;width:178px;height:28px"><svg style="left:5.5px;top:2.8px" width="16" height="16" viewBox="0 0 16 16"><svg x="-1" y="0" width="16" height="16" viewBox="0 0 16 16" style="position:static;overflow:visible"><path d="M2.500 1.500 h8.500 l4.500 4.500 v9.500 h-13z" fill="#f5f5f5" stroke="#c4c4c4" stroke-width="1"/><path d="M11 1.500 v4.500 h4.500" fill="#e9e9e9" stroke="#c8c8c8" stroke-width=".8"/></svg><svg x="-.8" y="2.800" width="14" height="14" viewBox="0 0 16 16" style="position:static;overflow:visible"><path d="M.4 15.700 q2-.3 2.800-2.200" stroke="#4f7fcc" stroke-width="2" fill="none"/><ellipse cx="6.200" cy="10" rx="4.900" ry="3.300" transform="rotate(-45 6.200 10)" fill="#5e8fd8"/><ellipse cx="5.100" cy="9.200" rx="2.800" ry="1.100" transform="rotate(-45 5.100 9.200)" fill="#a9c8f2"/><path d="M6.800 5.800 l3.600 3.600 1.500-1.500 -3.600-3.600z" fill="#46598a"/><path d="M9.700 5.300 l2-2 M11.200 6.800 l2-2" stroke="#80858f" stroke-width="1.400"/></svg></svg><div class="t" style="top:7px;left:26px;font-size:11.5px;color:#1f8fd8;font-weight:700;letter-spacing:-0.085px;">Daňový doklad: 2021201</div><svg style="left:165.5px;top:4.500px" width="6" height="6" viewBox="0 0 6 6"><path d="M.3 .3 l5.400 5.400 M5.700 .3 l-5.400 5.400" stroke="#3eaae6" stroke-width="1"/></svg></div><div class="a" style="left:267px;top:68px;width:1389px;height:29px;background:#f7feff;border-bottom:1px solid #dde6ee"><svg style="left:5px;top:6px;opacity:0.62" width="16" height="16" viewBox="0 0 16 16"><rect x=".8" y=".8" width="14.400" height="14.400" rx="1" fill="url(#gs)" stroke="#5f82d2" stroke-width="1"/><rect x="3.500" y="1.300" width="9" height="5.500" fill="#fdfdff"/><rect x="5" y="2" width="1" height="2.200" fill="#8aa3df"/><rect x="3" y="9.500" width="10" height="5.200" fill="#f3faef"/><rect x="4" y="10.800" width="8" height=".9" fill="#8cc97c"/><rect x="4" y="12.600" width="8" height=".9" fill="#8cc97c"/></svg><div class="tb d" style="left:23.7px;top:8.5px;font-size:12px;letter-spacing:-0.181px">Uložit</div><div class="sep" style="left:59px"></div><svg style="left:68px;top:6px;opacity:0.62" width="16" height="16" viewBox="0 0 16 16"><svg x="0" y="0" width="16" height="16" viewBox="0 0 16 16" style="position:static;overflow:visible"><rect x=".8" y=".8" width="14.400" height="14.400" rx="1" fill="url(#gs)" stroke="#5f82d2" stroke-width="1"/><rect x="3.500" y="1.300" width="9" height="5.500" fill="#fdfdff"/><rect x="5" y="2" width="1" height="2.200" fill="#8aa3df"/><rect x="3" y="9.500" width="10" height="5.200" fill="#f3faef"/><rect x="4" y="10.800" width="8" height=".9" fill="#8cc97c"/><rect x="4" y="12.600" width="8" height=".9" fill="#8cc97c"/></svg><circle cx="12" cy="12.200" r="3.600" fill="#8fd07a" stroke="#d9f3d0" stroke-width=".8"/><path d="M10 12.200 h4 M12 10.200 v4" stroke="#fff" stroke-width="1.300"/></svg><div class="tb d" style="left:86.5px;top:8.5px;font-size:12px;letter-spacing:0.064px">Uložit+nový</div><svg style="left:157px;top:6px;opacity:0.62" width="16" height="16" viewBox="0 0 16 16"><svg x="0" y="0" width="16" height="16" viewBox="0 0 16 16" style="position:static;overflow:visible"><rect x=".8" y=".8" width="14.400" height="14.400" rx="1" fill="url(#gs)" stroke="#5f82d2" stroke-width="1"/><rect x="3.500" y="1.300" width="9" height="5.500" fill="#fdfdff"/><rect x="5" y="2" width="1" height="2.200" fill="#8aa3df"/><rect x="3" y="9.500" width="10" height="5.200" fill="#f3faef"/><rect x="4" y="10.800" width="8" height=".9" fill="#8cc97c"/><rect x="4" y="12.600" width="8" height=".9" fill="#8cc97c"/></svg><rect x="8.600" y="8.800" width="7" height="7" rx="1.500" fill="#ee6a62"/><path d="M10.300 10.500 l3.600 3.600 M13.900 10.500 l-3.600 3.600" stroke="#fff" stroke-width="1.400"/></svg><div class="tb d" style="left:175.3px;top:8.5px;font-size:12px;letter-spacing:-0.013px">Uložit+zavřít</div><div class="sep" style="left:248.3px"></div><svg style="left:257.5px;top:6px" width="16" height="16" viewBox="0 0 16 16"><circle cx="8" cy="8" r="7" fill="#e8413a" stroke="#c02a22" stroke-width="1"/><path d="M2.500 5.500 a6 6 0 0 1 11 0" fill="none" stroke="#f7a39e" stroke-width="1.500" opacity=".8"/><rect x="3.500" y="6.500" width="9" height="3" rx=".5" fill="#fff"/></svg><div class="tb" style="left:275.3px;top:8.5px;font-size:12px;letter-spacing:0.244px">Smazat</div><div class="sep" style="left:323.5px"></div><svg style="left:332px;top:6px" width="16" height="16" viewBox="0 0 16 16"><path d="M4 6.500 v-5.800 h5.500 l3 3 v2.800z" fill="#e2f1fb" stroke="#4a8fe0" stroke-width="1"/><path d="M7 3 h3 M6.500 4.500 h3.500" stroke="#a9d3f0" stroke-width=".8"/><path d="M.6 8.800 q0-2.600 2.600-2.600 h9.600 q2.600 0 2.600 2.600 v3.800 q0 1-1 1 h-12.800 q-1 0-1-1z" fill="#ececec" stroke="#5c5c5c" stroke-width="1"/><path d="M2.500 8 h11" stroke="#fff" stroke-width="1"/><rect x="3.500" y="9.300" width="9" height="2.200" fill="#9c9c9c"/><path d="M3.800 11.800 h8.400 v3.200 q0 .7-.7 .7 h-7 q-.7 0-.7-.7z" fill="#f6faff" stroke="#4a8fe0" stroke-width="1"/></svg><div class="tb" style="left:351.5px;top:8.92px;font-size:11.5px;letter-spacing:-0.284px">Tisk</div><svg style="left:376px;top:13px" width="6" height="4" viewBox="0 0 6 4"><path d="M0 0 h6 l-3 3.600z" fill="#0c1c33"/></svg><svg style="left:393px;top:6px" width="16" height="16" viewBox="0 0 16 16"><rect x="2.500" y="1" width="11.500" height="13.500" fill="#f8f8f8" stroke="#c9c9c9" stroke-width="1"/><path d="M2.500 1 v13.500" stroke="#9a5a2c" stroke-width="2.200" stroke-dasharray="1.200 .9"/><rect x="6" y="3.500" width="6" height="3" fill="#5d86d8"/><rect x="6" y="7.500" width="5" height="1" fill="#a8bce8"/><svg x="6.200" y="7.500" width="9.800" height="8.500" viewBox="0 0 11 10" style="position:static;overflow:visible"><path d="M.6 3 h4.900 v-2.400 l5 4.400 -5 4.400 v-2.400 h-4.900z" fill="#78b85c" stroke="#3f7f30" stroke-width="1"/><path d="M1.500 4.300 h5" stroke="#b8dfa6" stroke-width="1"/></svg></svg><div class="tb" style="left:411px;top:8.5px;font-size:12px;letter-spacing:0.235px">Náhled</div><svg style="left:455px;top:13px" width="6" height="4" viewBox="0 0 6 4"><path d="M0 0 h6 l-3 3.600z" fill="#0c1c33"/></svg><svg style="left:472px;top:6px" width="16" height="16" viewBox="0 0 16 16"><path d="M3 1 h7 l3.500 3.500 v10.500 h-10.500z" fill="#fbfbfb" stroke="#c9c9c9" stroke-width="1"/><path d="M10 1 v3.500 h3.500" fill="#e9e9e9" stroke="#c9c9c9" stroke-width=".8"/><path d="M1 13.500 q3.500-3 5-8 q.7-2.500-.4-2.800 q-1 .300-.5 2.600 q1 4 7.500 5.800 q1.800.2 1.600-.7 q-.6-1-3-.7 q-5 .8-10.200 3.800z" fill="none" stroke="#e0322c" stroke-width="1.200"/></svg><div class="tb" style="left:490.2px;top:9.98px;font-size:10.25px;letter-spacing:-0.1px">PDF</div><svg style="left:515.5px;top:13px" width="6" height="4" viewBox="0 0 6 4"><path d="M0 0 h6 l-3 3.600z" fill="#0c1c33"/></svg><svg style="left:531.5px;top:6px" width="16" height="16" viewBox="0 0 16 16"><circle cx="8" cy="8" r="7" fill="#4f7fd0" stroke="#2c55a6" stroke-width="1"/><circle cx="8" cy="8" r="5.600" fill="none" stroke="#a9c3ee" stroke-width=".9"/><rect x="7" y="7" width="2.200" height="4.600" fill="#fff"/><rect x="6.200" y="11" width="3.800" height="1" fill="#fff"/><circle cx="8" cy="4.900" r="1.300" fill="#fff"/></svg><svg style="left:555px;top:6px" width="16" height="16" viewBox="0 0 16 16"><circle cx="8.500" cy="7.500" r="6.700" fill="#5b9be2" stroke="#5cae3c" stroke-width="1.500"/><path d="M5.500 2.500 q3-1.500 4.500 .5 q1.500 1.500 -.5 3 q-2.500 1.500-4-.5 q-1-2 0-3z M10.500 8.500 q2.500-1 3.500 .5 q-.5 2.500-2.500 3.500 q-1.500-1.500-1-4z" fill="#7cc86a"/><svg x="-.3" y="3.300" width="12.500" height="12.500" viewBox="0 0 16 16" style="position:static;overflow:visible"><path d="M.4 15.700 q2-.3 2.800-2.200" stroke="#4f7fcc" stroke-width="2" fill="none"/><ellipse cx="6.200" cy="10" rx="4.900" ry="3.300" transform="rotate(-45 6.200 10)" fill="#5e8fd8"/><ellipse cx="5.100" cy="9.200" rx="2.800" ry="1.100" transform="rotate(-45 5.100 9.200)" fill="#a9c8f2"/><path d="M6.800 5.800 l3.600 3.600 1.500-1.500 -3.600-3.600z" fill="#46598a"/><path d="M9.700 5.300 l2-2 M11.200 6.800 l2-2" stroke="#80858f" stroke-width="1.400"/></svg></svg><svg style="left:1030px;top:6px" width="16" height="16" viewBox="0 0 16 16"><rect x=".8" y=".8" width="11" height="11.500" fill="#fff" stroke="#6d97dc" stroke-width="1"/><rect x="1.500" y="1.500" width="9.600" height="1.600" fill="#9fd08a"/><path d="M1 5 h10.500 M1 7.500 h10.500 M1 10 h10.500 M4.200 3.500 v8.500 M7.800 3.500 v8.500" stroke="#a9c1ea" stroke-width=".8"/><rect x="6.500" y="7" width="9" height="8.500" rx=".8" fill="url(#gs)" stroke="#3f64c2" stroke-width="1"/><rect x="8.300" y="7.500" width="5.400" height="3" fill="#fff"/><rect x="8.300" y="12.300" width="5.400" height="2.700" fill="#d9f2d0" stroke="#78b868" stroke-width=".5"/></svg><svg style="left:1048px;top:13px" width="6" height="4" viewBox="0 0 6 4"><path d="M0 0 h6 l-3 3.600z" fill="#0c1c33"/></svg><div class="sep" style="left:1063px"></div><svg style="left:1072px;top:6px" width="16" height="16" viewBox="0 0 16 16"><rect x=".8" y="2" width="14.400" height="10.500" fill="#edf4fd" stroke="#4b80d6" stroke-width="1.100"/><path d="M1 2.500 l7 6 7-6 M1 12 l5-4.500 M15 12 l-5-4.500" fill="none" stroke="#7aa6e6" stroke-width="1"/><rect x="4.500" y="10.300" width="6" height="4.400" rx="2.200" fill="none" stroke="#555" stroke-width="1.500"/><rect x="8.500" y="10.300" width="6" height="4.400" rx="2.200" fill="none" stroke="#555" stroke-width="1.500"/></svg><div class="tb" style="left:1090.5px;top:8.5px;font-size:12px;letter-spacing:0.074px">Email</div><div class="sep" style="left:1127px"></div><svg style="left:1136px;top:6px" width="16" height="16" viewBox="0 0 16 16"><path d="M1.500 2 l6.500 6 -6.500 6z" fill="#4f86d6" stroke="#2c5cae" stroke-width="1"/><path d="M8 2 l6.500 6 -6.500 6z" fill="#4f86d6" stroke="#2c5cae" stroke-width="1"/><path d="M3 5 l3.200 3 -3.200 3z M9.500 5 l3.200 3 -3.200 3z" fill="#a9c8f2"/></svg><div class="tb" style="left:1154px;top:8.5px;font-size:12px;letter-spacing:-0.122px">Posuvník</div><div class="sep" style="left:1209px"></div><svg style="left:1218px;top:6px" width="16" height="16" viewBox="0 0 16 16"><circle cx="8" cy="8" r="7" fill="#7fa6e2" stroke="#9fb9e6" stroke-width="1"/><circle cx="8" cy="8" r="5.700" fill="#3f74cc"/><path d="M3.500 6 a5 5 0 0 1 9 0 q-4.500 2-9 0z" fill="#8fb2ec" opacity=".8"/><text x="8" y="11.700" font-size="10" font-weight="700" text-anchor="middle" fill="#fff" font-family="Liberation Sans,sans-serif">?</text></svg><div class="tb" style="left:1236px;top:9.35px;font-size:11.0px;letter-spacing:-0.103px">FAQ</div><svg style="left:1266px;top:6px" width="16" height="16" viewBox="0 0 16 16"><rect x="1" y=".8" width="12.500" height="14.400" rx="1" fill="#b8763a" stroke="#4a4a3a" stroke-width="1.200"/><path d="M3 1 v14" stroke="#4a5a3a" stroke-width="1.400"/><rect x="13.500" y="2" width="1.500" height="3.500" fill="#3f7fe0"/><rect x="13.500" y="5.500" width="1.500" height="3.500" fill="#c23fb8"/><text x="8.300" y="10" font-size="7.500" text-anchor="middle" fill="#f3d9b0" font-family="Liberation Sans,sans-serif">@</text><circle cx="12.200" cy="12.500" r="3.300" fill="#5aae46" stroke="#e6f6e0" stroke-width=".8"/><path d="M10.300 12.500 h3.800 M12.200 10.600 v3.800" stroke="#fff" stroke-width="1.300"/></svg><div class="tb" style="left:1283.5px;top:8.5px;font-size:12px;letter-spacing:0.428px">Odúčtovat doklad</div></div><div class="a" style="left:267px;top:97px;width:1389px;height:7px;background:#eeeff5"></div><div class="a" style="left:267px;top:130px;width:1389px;height:1px;background:#d3dfe7"></div><div class="stab" style="left:269px;width:132px;height:28px"><div class="t" style="top:6.5px;left:10.5px;font-size:11.5px;color:#1f8fd8;font-weight:700;letter-spacing:0.318px;">Základní informace</div></div><div class="stab" style="left:403px;width:108px;height:26px"><div class="t" style="top:7px;left:10px;font-size:12px;letter-spacing:0.267px;">Další informace</div></div><div class="stab" style="left:513px;width:67px;height:26px"><div class="t" style="top:7px;left:10.5px;font-size:12px;letter-spacing:0.201px;">Soubory</div></div><div class="a" style="left:267px;top:131px;width:1389px;height:250px;background:#f7feff"></div><div class="a" style="left:267px;top:380.500px;width:1389px;height:1.500px;background:#e6e8f2"></div><div class="a" style="left:267px;top:382px;width:1389px;height:28px;background:#f7feff"></div><div class="a" style="left:267px;top:410px;width:1389px;height:1.500px;background:#e9ebf4"></div><div class="fs" style="left:279px;top:142px;width:444px;height:148px"></div><div class="lg" style="left:289.5px;top:136px">Zákazník a data</div><div class="fs" style="left:736px;top:142px;width:445px;height:148px"></div><div class="lg" style="left:746.5px;top:136px">Doklad a platba</div><div class="fs" style="left:1194px;top:142px;width:444px;height:148px"></div><div class="lg" style="left:1203.5px;top:136px">Info</div><div class="lb" style="left:292.3px;top:154.8px;font-size:12px;letter-spacing:-0.212px">Deník</div><div class="lb" style="left:504.3px;top:154.8px;font-size:12px;letter-spacing:0.408px">Období</div><div class="in" style="left:292px;top:170px;width:207px"><div class="v" style="font-size:13.0px;top:4.3px;letter-spacing:0.385px;">303 Daňové doklady vydané (</div><div class="bt last" style="right:0px"><svg style="left:3.7px;top:7px" width="8" height="6" viewBox="0 0 8 6"><path d="M1 1 l3 3 3-3" fill="none" stroke="#3aa8e6" stroke-width="1.800" stroke-linejoin="miter"/></svg></div></div><div class="in" style="left:504px;top:170px;width:206px"><div class="v" style="font-size:12px;top:5.14px;letter-spacing:-0.227px;">III 01.03.2021 - 31.03.2021</div><div class="bt last" style="right:0px"><svg style="left:3.7px;top:7px" width="8" height="6" viewBox="0 0 8 6"><path d="M1 1 l3 3 3-3" fill="none" stroke="#3aa8e6" stroke-width="1.800" stroke-linejoin="miter"/></svg></div></div><div class="lb" style="left:292.3px;top:195.8px;font-size:12px;letter-spacing:-0.155px">Zákazník</div><div class="in" style="left:292px;top:211px;width:418px"><div class="v" style="font-size:12px;top:5.14px;letter-spacing:-0.326px;">NEWLINK MORAVIA</div><div class="bt" style="right:34px;border-left-color:transparent"><svg style="left:4.5px;top:6px" width="8" height="8" viewBox="0 0 8 8"><circle cx="4" cy="4" r="2.400" fill="#f7fbf5" stroke="#8dbc7c" stroke-width="1.700"/></svg></div><div class="bt" style="right:17px"><svg style="left:2.5px;top:4px" width="12" height="12" viewBox="0 0 12 12"><circle cx="7.500" cy="4.500" r="3.200" fill="#fdfeff" stroke="#3aa4e4" stroke-width="1.050"/><path d="M5.200 6.800 l-4 4" stroke="#3aa4e4" stroke-width="1.500" stroke-linecap="round"/></svg></div><div class="bt last" style="right:0px"><svg style="left:3.7px;top:7px" width="8" height="6" viewBox="0 0 8 6"><path d="M1 1 l3 3 3-3" fill="none" stroke="#3aa8e6" stroke-width="1.800" stroke-linejoin="miter"/></svg></div></div><div class="lb" style="left:292.3px;top:236.59px;font-size:12.25px;letter-spacing:0.318px">Datum dokladu</div><div class="lb" style="left:433.4px;top:236.8px;font-size:12px;letter-spacing:0.373px">Datum zaúčtování</div><div class="lb" style="left:574.3px;top:237.86px;font-size:10.75px;letter-spacing:-0.255px">DUZP</div><div class="in" style="left:292px;top:252px;width:136px"><div class="v" style="font-size:12px;top:5.14px;letter-spacing:-0.428px;">18.03.2021</div><div class="bt last" style="right:0px"><svg style="left:2.2px;top:3.3px" width="12" height="12" viewBox="0 0 12 12"><rect x=".7" y="1.200" width="10.600" height="10" rx="1" fill="#fbfdff" stroke="#3596e6" stroke-width="1.100"/><path d="M.7 1.900 h10.600" stroke="#3596e6" stroke-width="1.500"/><circle cx="9" cy="5.200" r="1.500" fill="#fff" stroke="#f09a4a" stroke-width="1"/></svg></div></div><div class="in" style="left:433px;top:252px;width:136px"><div class="v" style="font-size:12px;top:5.14px;letter-spacing:-0.384px;">18.03.2021</div><div class="bt last" style="right:0px"><svg style="left:2.2px;top:3.3px" width="12" height="12" viewBox="0 0 12 12"><rect x=".7" y="1.200" width="10.600" height="10" rx="1" fill="#fbfdff" stroke="#3596e6" stroke-width="1.100"/><path d="M.7 1.900 h10.600" stroke="#3596e6" stroke-width="1.500"/><circle cx="9" cy="5.200" r="1.500" fill="#fff" stroke="#f09a4a" stroke-width="1"/></svg></div></div><div class="in" style="left:574px;top:252px;width:136px"><div class="v" style="font-size:12px;top:5.14px;letter-spacing:-0.395px;">10.03.2021</div><div class="bt last" style="right:0px"><svg style="left:2.2px;top:3.3px" width="12" height="12" viewBox="0 0 12 12"><rect x=".7" y="1.200" width="10.600" height="10" rx="1" fill="#fbfdff" stroke="#3596e6" stroke-width="1.100"/><path d="M.7 1.900 h10.600" stroke="#3596e6" stroke-width="1.500"/><circle cx="9" cy="5.200" r="1.500" fill="#fff" stroke="#f09a4a" stroke-width="1"/></svg></div></div><div class="a" style="left:394px;top:256px;width:15px;height:15px;border:1px solid #9a9a9a;border-radius:3px;background:linear-gradient(#fff,#e6e6e6)"></div><svg style="left:398px;top:262px" width="7" height="4" viewBox="0 0 7 4"><path d="M0 0 h7 l-3.500 4z" fill="#b9b9b9"/></svg><div class="lb" style="left:749.4px;top:154.8px;font-size:12px;letter-spacing:0.25px">Číslo dokladu</div><div class="in" style="left:749px;top:170px;width:419px"><div class="v" style="font-size:12px;top:5.14px;font-weight:700;letter-spacing:-0.452px;">2021201</div></div><div class="a" style="left:1150px;top:173px;width:16px;height:16px;border:1px solid #9a9a9a;border-radius:3px;background:#fafafa"></div><svg style="left:1153px;top:177px" width="10" height="9" viewBox="0 0 10 9"><path d="M5 .5 l4.500 4.500 h-2.500 v3.500 h-4 v-3.500 h-2.500z" fill="#a6d98a" stroke="#6db550" stroke-width=".8"/></svg><div class="lb" style="left:749.4px;top:195.59px;font-size:12.25px;letter-spacing:0.313px">Platba</div><div class="in" style="left:749px;top:211px;width:385px"><div class="v" style="font-size:12px;top:5.14px;letter-spacing:-0.027px;">400 21001</div><div class="bt" style="right:17px"><svg style="left:4px;top:6px" width="8" height="8" viewBox="0 0 8 8"><path d="M.5 .5 l7 7 M7.500 .5 l-7 7" stroke="#2a9fe0" stroke-width="1.200"/></svg></div><div class="bt last" style="right:0px"><svg style="left:3.7px;top:7px" width="8" height="6" viewBox="0 0 8 6"><path d="M1 1 l3 3 3-3" fill="none" stroke="#3aa8e6" stroke-width="1.800" stroke-linejoin="miter"/></svg></div></div><div class="a" style="left:1138px;top:194px;width:25px;height:38px;border:1px solid #c6d8e2;border-radius:9px;background:#f2f2f2;box-shadow:0 1px 2px rgba(120,140,165,.4)"></div><div class="t" style="top:213px;left:1146.3px;font-size:17px;color:#6bb551;font-weight:700;transform:scaleX(1.28);transform-origin:0 0;">$</div><div class="lb" style="left:749.4px;top:236.8px;font-size:12px;letter-spacing:0.328px">Zálohová faktura</div><div class="in" style="left:749px;top:252px;width:160px"><div class="v" style="font-size:12px;top:5.14px;letter-spacing:0.115px;">2021302</div></div><div class="a" style="left:913px;top:235px;width:25px;height:38px;border:1px solid #c6d8e2;border-radius:9px;background:#f2f2f2;box-shadow:0 1px 2px rgba(120,140,165,.4)"></div><svg style="left:918px;top:255px" width="15" height="15" viewBox="0 0 15 15"><circle cx="5.500" cy="5.500" r="4" fill="#dcecfb" stroke="#8fb7e6" stroke-width="1.200"/><path d="M8.500 8.500 l4.500 4.500" stroke="#c9773a" stroke-width="2.200" stroke-linecap="round"/><path d="M5.500 5.500 h7 M9 2 v7" stroke="#4f9a3a" stroke-width="2.200"/></svg><div class="lb" style="left:942.9px;top:237.8px;font-size:12px;letter-spacing:0.347px">Opravný daňový doklad</div><div class="a" style="left:942px;top:258px;width:13px;height:13px;border:1px solid #dfe3ef;border-radius:2px;background:#f7f8fd"></div><div class="lb" style="left:1205.3px;top:152.8px;font-size:12px;letter-spacing:0.076px">Účet</div><div class="in" style="left:1205px;top:168px;width:422px"><div class="v" style="font-size:12px;top:5.14px;letter-spacing:0.425px;">32401 Přijaté zálohy</div><div class="bt" style="right:34px;border-left-color:transparent"><svg style="left:4.5px;top:6px" width="8" height="8" viewBox="0 0 8 8"><circle cx="4" cy="4" r="2.400" fill="#f7fbf5" stroke="#8dbc7c" stroke-width="1.700"/></svg></div><div class="bt" style="right:17px"><svg style="left:2.5px;top:4px" width="12" height="12" viewBox="0 0 12 12"><circle cx="7.500" cy="4.500" r="3.200" fill="#fdfeff" stroke="#3aa4e4" stroke-width="1.050"/><path d="M5.200 6.800 l-4 4" stroke="#3aa4e4" stroke-width="1.500" stroke-linecap="round"/></svg></div><div class="bt last" style="right:0px"><svg style="left:3.7px;top:7px" width="8" height="6" viewBox="0 0 8 6"><path d="M1 1 l3 3 3-3" fill="none" stroke="#3aa8e6" stroke-width="1.800" stroke-linejoin="miter"/></svg></div></div><div class="lb" style="left:1205.3px;top:193.8px;font-size:12px;letter-spacing:0.295px">Měna</div><div class="lb" style="left:1419px;top:193.8px;font-size:12px;letter-spacing:-0.056px">kurz</div><div class="in" style="left:1205px;top:209px;width:208px"><div class="v" style="font-size:12px;top:5.14px;letter-spacing:-0.45px;">CZK</div><div class="bt last" style="right:0px"><svg style="left:3.7px;top:7px" width="8" height="6" viewBox="0 0 8 6"><path d="M1 1 l3 3 3-3" fill="none" stroke="#3aa8e6" stroke-width="1.800" stroke-linejoin="miter"/></svg></div></div><div class="in" style="left:1419px;top:209px;width:208px"><div class="v r" style="font-size:12px;top:5.14px;letter-spacing:0.205px;margin-right:-0.205px;">1,00000</div></div><div class="lb" style="left:1205.3px;top:234.8px;font-size:12px;letter-spacing:0.383px;color:#4c4f58">Částka platby</div><div class="in" style="left:1205px;top:250px;width:422px"><div class="v r" style="font-size:12.5px;top:4.72px;letter-spacing:0.375px;margin-right:-0.375px;color:#8c8c8c;">20 000,00</div></div><div class="lb" style="left:279.500px;top:300px;color:#a3a3a3;font-size:12px;letter-spacing:-.1px">Popis pro zákazníka:</div><div class="in" style="left:434px;top:295px;width:1207px;height:50px;border-radius:5px"></div><div class="lb" style="left:279.500px;top:352px;color:#2b3040;font-size:12px;letter-spacing:-.1px">Popis interní:</div><div class="in" style="left:434px;top:347px;width:1207px;height:23px;border-radius:5px;border-color:#b9c0cf"><div class="v" style="color:#2b3040;top:5px">záloha 2</div></div><svg style="left:1623px;top:354px" width="16" height="14" viewBox="0 0 16 14"><rect x=".5" y=".5" width="15" height="13" rx="1" fill="#f4f8fe" stroke="#6f97dc" stroke-width="1"/><rect x="1" y="1" width="14" height="2.500" fill="#5f8fe0"/><path d="M4.500 5.500 h9.500 M4.500 7.500 h9.500 M4.500 9.500 h9.500 M4.500 11.500 h9.500" stroke="#8a8a8a" stroke-width=".9"/><path d="M2.500 5 v7" stroke="#5f8fe0" stroke-width="1" stroke-dasharray="1 1"/></svg><div class="a" style="left:267px;top:411px;width:1378px;height:25px;background:#f7feff"></div><div class="a" style="left:1645px;top:411px;width:11px;height:25px;background:#f0f0f0;border-left:1px solid #dcdcdc"></div><div class="a" style="left:611px;top:412px;width:1.500px;height:24px;background:#dde2e8"></div><div class="a" style="left:955px;top:412px;width:1.500px;height:24px;background:#dde2e8"></div><div class="a" style="left:1300px;top:412px;width:1.500px;height:24px;background:#dde2e8"></div><div class="t" style="top:417.5px;left:274.3px;font-size:11.5px;color:#22262f;letter-spacing:-0.24px;">Kód DPH</div><div class="t" style="top:417.08px;right:740.51px;font-size:12.0px;color:#22262f;letter-spacing:0.285px;">Celkem</div><div class="t" style="top:417.5px;right:396.37px;font-size:11.5px;color:#22262f;letter-spacing:0.034px;">Základ DPH</div><div class="t" style="top:417.08px;right:52.21px;font-size:12.0px;color:#22262f;letter-spacing:0.294px;">Daň</div><div class="a" style="left:267px;top:436px;width:1389px;height:576px;background:#fff"></div><div class="a" style="left:267px;top:436px;width:1379px;height:22px;background:#fdecdb;border:1px dotted #2fa4df"></div><div class="t" style="top:441.5px;left:274.3px;font-size:11.5px;color:#1d2027;letter-spacing:-0.201px;">P21 Prodej tuzemsko 21%</div><div class="t" style="top:441px;right:727.86px;font-size:12px;color:#1d2027;letter-spacing:0.04px;">20 000,00</div><div class="t" style="top:441px;right:383.56px;font-size:12px;color:#1d2027;letter-spacing:-0.36px;">16 528,93</div><div class="t" style="top:441.21px;right:39.79px;font-size:11.75px;color:#1d2027;letter-spacing:-0.59px;">3 471,07</div><div class="a" style="left:267px;top:1012px;width:1388px;height:21px;background:#d6d6d6"></div><div class="t" style="top:1015px;left:273.5px;font-size:10px;color:#2f8de4;">*</div><div class="t" style="top:1015.5px;right:728.12px;font-size:12px;color:#2f8de4;letter-spacing:0.178px;">20 000,00</div><div class="t" style="top:1015.5px;right:383.9px;font-size:12px;color:#2f8de4;letter-spacing:-0.197px;">16 528,93</div><div class="t" style="top:1015.5px;right:40.26px;font-size:12px;color:#2f8de4;letter-spacing:-0.558px;">3 471,07</div><div class="a" style="left:1656px;top:29px;width:22px;height:1001px;border:1px solid #19b1de;background:#efefef"></div><svg style="left:1663px;top:36px" width="10" height="10" viewBox="0 0 10 10"><path d="M4.500 .8 l-3.700 4.200 3.700 4.200 M9 .8 l-3.700 4.200 3.700 4.200" fill="none" stroke="#2196e3" stroke-width="1.200"/></svg><div class="a" style="left:0;top:1033px;width:1680px;height:17px;background:#f7feff"></div><div class="t" style="top:1036px;left:758.5px;font-size:10px;color:#2b3040;letter-spacing:-0.05px;">ALLEGRO Framework 2.96.3112.0</div><div class="t" style="top:1035px;left:1669px;font-size:10px;color:#2b3040;">x</div></body></html>
